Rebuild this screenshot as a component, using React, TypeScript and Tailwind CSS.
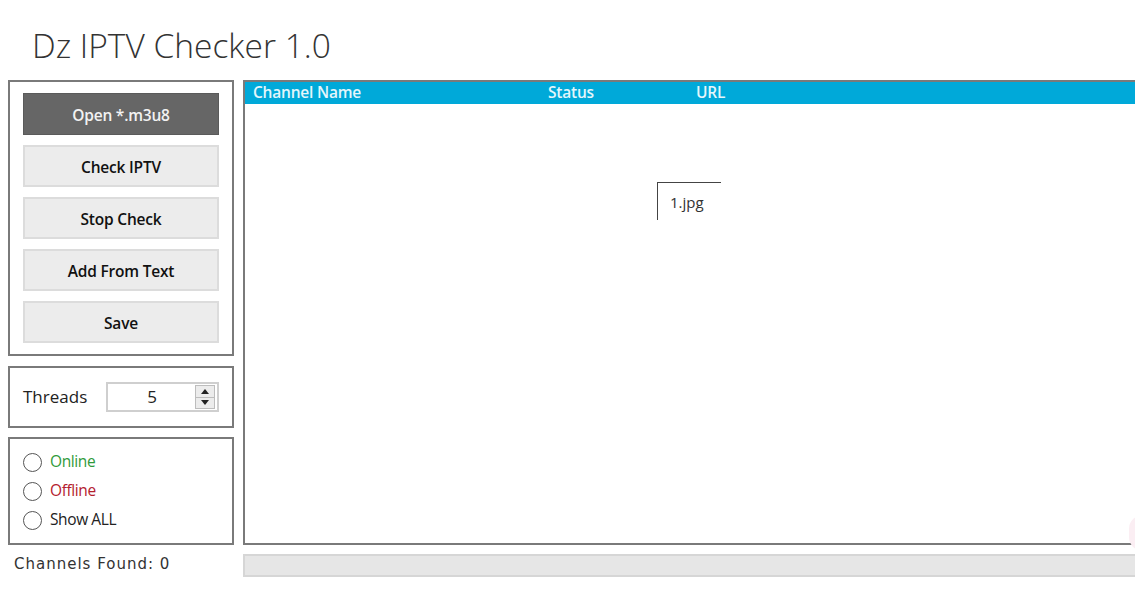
import React, { useState } from 'react';

const buttons = ['Check IPTV', 'Stop Check', 'Add From Text', 'Save'];

const filters = [
  { label: 'Online', color: 'text-[#2f9a3a]' },
  { label: 'Offline', color: 'text-[#b4202e]' },
  { label: 'Show ALL', color: 'text-[#222]' },
];

export default function App() {
  const [threads, setThreads] = useState(5);
  const [filter, setFilter] = useState<string | null>(null);

  return (
    <div className="w-[1135px] h-[604px] bg-white overflow-hidden font-['Open_Sans',sans-serif] text-[#222]">
      <h1 className="pt-[21px] pl-[32px] h-[80px] text-[33.5px] leading-[48px] font-light text-[#333]">
        Dz IPTV Checker 1.0
      </h1>

      <div className="flex gap-[9px] pl-[8px]">
        {/* left column */}
        <div className="w-[226px] shrink-0 flex flex-col">
          <div className="h-[276px] border-2 border-[#7a7a7a] px-[13px] pt-[11px] flex flex-col gap-[10px]">
            <button className="h-[42px] pt-[3px] bg-[#666] text-[#f2f2f2] text-[15.5px] font-semibold tracking-[-0.2px] border border-[#5a5a5a]">
              Open *.m3u8
            </button>
            {buttons.map((b) => (
              <button
                key={b}
                className="h-[42px] pt-[3px] bg-[#ececec] text-[#111] text-[15.5px] font-semibold tracking-[-0.2px] border-2 border-[#dcdcdc]"
              >
                {b}
              </button>
            ))}
          </div>

          <div className="mt-[10px] h-[62px] border-2 border-[#7a7a7a] px-[13px] flex items-center justify-between">
            <span className="text-[17px] text-[#222]">Threads</span>
            <div className="w-[113px] h-[30px] border-2 border-[#cfcfcf] flex items-center bg-white">
              <span className="flex-1 text-center text-[17px] pl-[1px]">{threads}</span>
              <div className="w-[20px] h-[24px] mr-[2px] flex flex-col border border-[#bdbdbd] bg-[#ececec]">
                <button
                  onClick={() => setThreads(threads + 1)}
                  className="flex-1 flex items-center justify-center border-b border-[#bdbdbd]"
                >
                  <svg width="8" height="5" viewBox="0 0 8 5"><path d="M0 5 L4 0 L8 5 Z" fill="#222" /></svg>
                </button>
                <button
                  onClick={() => setThreads(Math.max(1, threads - 1))}
                  className="flex-1 flex items-center justify-center"
                >
                  <svg width="8" height="5" viewBox="0 0 8 5"><path d="M0 0 L4 5 L8 0 Z" fill="#222" /></svg>
                </button>
              </div>
            </div>
          </div>

          <div className="mt-[9px] h-[108px] border-2 border-[#7a7a7a] pl-[13px] pt-[13px] flex flex-col gap-[9px]">
            {filters.map((f) => (
              <label key={f.label} className="flex items-center gap-[8px] cursor-pointer h-[20px]">
                <span
                  onClick={() => setFilter(f.label)}
                  className="w-[19px] h-[19px] rounded-full border-[1.5px] border-[#555] bg-white flex items-center justify-center"
                >
                  {filter === f.label && <span className="w-[9px] h-[9px] rounded-full bg-[#333]" />}
                </span>
                <span className={`text-[15.5px] tracking-[-0.4px] ${f.color}`}>{f.label}</span>
              </label>
            ))}
          </div>

          <div className="mt-[8px] pl-[6px] text-[15px] tracking-[1px] text-[#333] font-['DejaVu_Sans',sans-serif]">
            Channels Found: 0
          </div>
        </div>

        {/* table column */}
        <div className="w-[900px] shrink-0 flex flex-col">
          <div className="relative h-[465px] border-2 border-[#7a7a7a] border-r-0 bg-white">
            <div className="h-[22px] bg-[#00a9d9] flex items-center text-[15.5px] leading-[18px] pb-[3px] font-semibold text-[#e4f6fb] tracking-[-0.2px]">
              <span className="pl-[8px] w-[303px]">Channel Name</span>
              <span className="w-[148px]">Status</span>
              <span>URL</span>
            </div>

            <div className="absolute left-[412px] top-[100px] w-[64px] h-[38px] border-t border-l border-[#444] pl-[12px] pt-[9px] text-[15px] text-[#333] leading-[20px]">
              1.jpg
            </div>

            <div className="absolute right-[-14px] bottom-[-8px] w-[28px] h-[36px] rounded-full bg-[#fbeef3]" />
          </div>

          <div className="mt-[9px] h-[23px] bg-[#e6e6e6] border-2 border-[#d6d6d6] border-r-0" />
        </div>
      </div>
    </div>
  );
}
